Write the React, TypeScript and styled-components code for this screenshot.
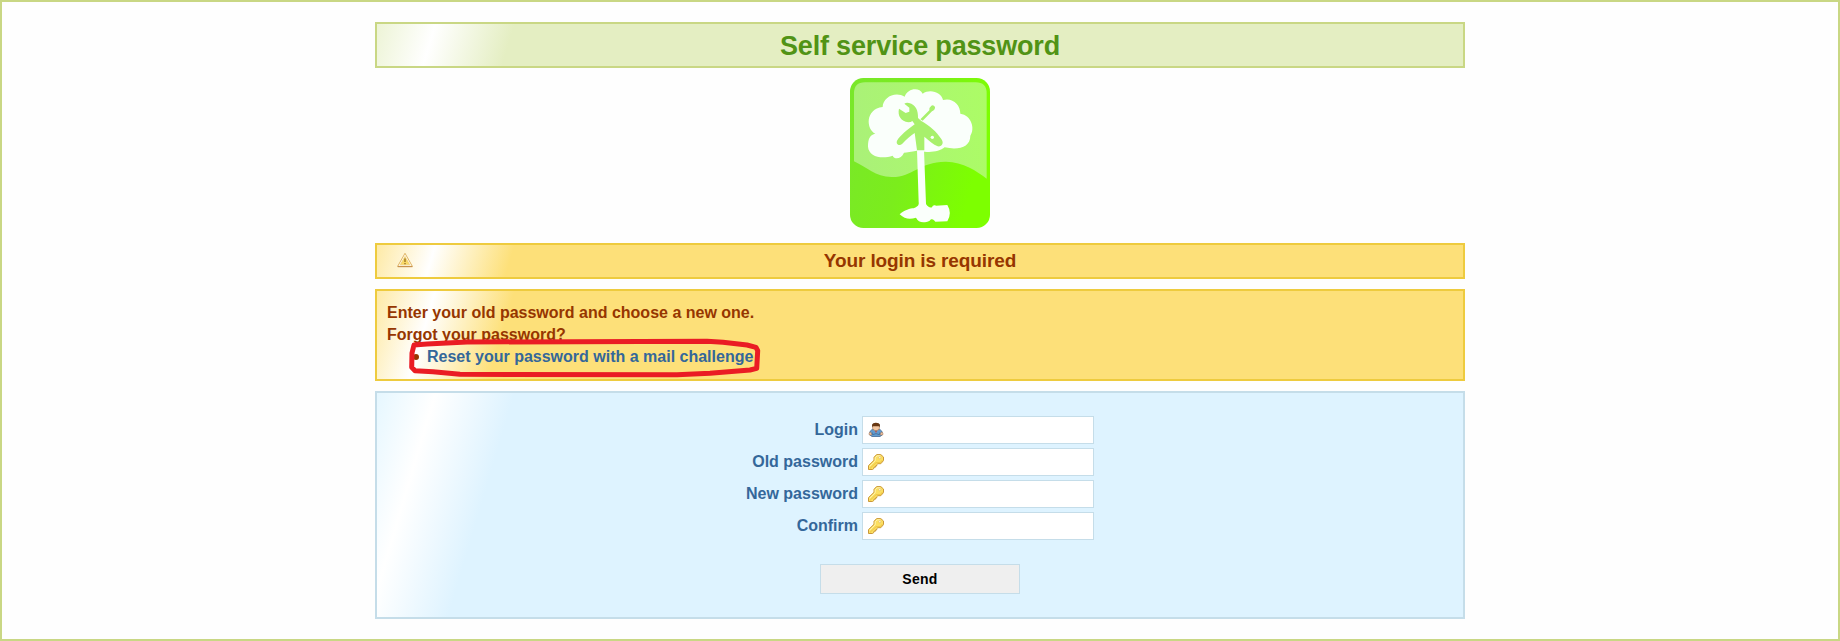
import React from "react";
import styled, { createGlobalStyle } from "styled-components";

const GlobalStyle = createGlobalStyle`
  * { box-sizing: border-box; }
  body {
    margin: 0;
    background: #fefefe;
    font-family: "Liberation Sans", Arial, sans-serif;
    font-size: 16px;
  }
`;

const tones = {
  green: { edge: "#c9d784", fill: "#e4eec2", start: "#edf4d6", text: "#519315" },
  yellow: { edge: "#eecb3e", fill: "#fde079", start: "#feeaa6", text: "#963600" },
  blue: { edge: "#c5dde9", fill: "#def3ff", start: "#e6f7ff", text: "#34679a" },
};

type Tone = keyof typeof tones;

const Page = styled.div`
  height: 641px;
  border: 2px solid #c9d784;
  padding-top: 20px;
`;

const Content = styled.main`
  width: 1090px;
  margin: 0 auto;
  display: flex;
  flex-direction: column;
`;

const Panel = styled.section<{ $tone: Tone; $height: number }>`
  position: relative;
  height: ${(p) => p.$height}px;
  margin-bottom: 10px;
  border: 2px solid ${(p) => tones[p.$tone].edge};
  color: ${(p) => tones[p.$tone].text};
  font-weight: bold;
  background: linear-gradient(
    106.5deg,
    ${(p) => tones[p.$tone].start} 0,
    #fff 56px,
    ${(p) => tones[p.$tone].fill} 132px
  );
`;

const Title = styled.h1`
  margin: 0;
  padding-top: 1px;
  font-size: 27px;
  line-height: 42px;
  letter-spacing: -0.17px;
  text-align: center;
`;

const LogoLink = styled.a`
  display: block;
  align-self: center;
  width: 140px;
  height: 150px;
  margin-bottom: 15px;
`;

const Notice = styled.p`
  margin: 0;
  font-size: 19px;
  line-height: 31px;
  letter-spacing: -0.12px;
  text-align: center;
`;

const NoticeIcon = styled.span`
  position: absolute;
  left: 20px;
  top: 7px;
  width: 16px;
  height: 16px;
`;

const Help = styled.div`
  padding: 11px 10px;
  line-height: 22px;
`;

const HelpList = styled.ul`
  margin: 0;
  padding: 0 0 0 26px;
  list-style: none;
`;

const HelpItem = styled.li`
  display: flex;
  align-items: center;

  &::before {
    content: "";
    width: 6px;
    height: 6px;
    margin-right: 8px;
    border-radius: 50%;
    background: currentColor;
  }
`;

const HelpLink = styled.a`
  color: #34679a;
  text-decoration: none;
`;

const Highlight = styled.svg`
  position: absolute;
  left: 30px;
  top: 46px;
  width: 356px;
  height: 44px;
`;

const Form = styled.form`
  display: flex;
  flex-direction: column;
  align-items: center;
  padding-top: 23px;
`;

const Fields = styled.div`
  display: grid;
  grid-template-columns: 116px 232px;
  gap: 4px;
  margin: 0 4px 24px 0;
`;

const Label = styled.label`
  text-align: right;
  white-space: nowrap;
  line-height: 27px;
`;

const Field = styled.div`
  height: 28px;
  display: flex;
  align-items: center;
  padding-left: 5px;
  background: #fff;
  border: 1px solid #c5dde9;
`;

const Input = styled.input`
  flex: 1;
  min-width: 0;
  height: 24px;
  margin-left: 4px;
  padding: 0;
  border: 0;
  outline: 0;
  background: transparent;
`;

const Send = styled.button`
  width: 200px;
  height: 30px;
  padding: 0;
  border: 1px solid #c5dde9;
  background: #efefef;
  color: #000;
  font: bold 14px "Liberation Sans", Arial, sans-serif;
  letter-spacing: 0.3px;
`;

function Logo() {
  return (
    <svg width="140" height="150" viewBox="30 24 420 450" preserveAspectRatio="none">
      <defs>
        <linearGradient id="base" x1="0" y1="0" x2="1" y2="0.3">
          <stop offset="0" stopColor="#79e72b" />
          <stop offset="0.5" stopColor="#7bed1c" />
          <stop offset="1" stopColor="#7dff00" />
        </linearGradient>
        <linearGradient id="gloss" x1="0" y1="0.4" x2="1" y2="0.3">
          <stop offset="0" stopColor="#aaf178" />
          <stop offset="1" stopColor="#acfc66" />
        </linearGradient>
      </defs>
      <rect x="30" y="24" width="420" height="450" rx="40" fill="url(#base)" />
      <path
        d="M42 274V70Q42 37 75 37H407Q440 37 440 70V326C410 303 370 276 318 275C240 274 218 322 155 321C105 320 82 292 42 274Z"
        fill="url(#gloss)"
      />
      <path
        d="M106 191C78 178 75 117 128 111C128 82 166 62 194 80C202 55 238 50 248 71C272 54 305 69 309 90C338 82 361 104 361 131C394 136 406 175 391 197C391 231 357 241 314 232C301 243 276 248 254 245L230 242C214 245 200 247 192 248C184 267 164 270 158 257C124 269 86 259 84 230C84 204 91 194 106 191Z"
        fill="#fafffb"
      />
      <path
        d="M231 240H252L258 402C263 410 269 414 276 412C278 406 282 404 288 407L322 405Q337 429 322 454L286 455C281 448 275 444 269 452C253 460 235 459 228 443C210 449 195 448 179 433C193 420 211 415 221 415C231 410 238 407 236 396Z"
        fill="#fafffb"
      />
      <g fill="#a8f06c">
        <path d="M177 116C172 137 183 154 205 157Q213 157 217 153L224 163C203 178 181 196 171 212C167 223 178 229 187 221C200 208 211 198 224 189L231 241H253V200C268 213 280 224 293 229C306 231 313 219 304 207C290 186 268 166 244 153L234 144C235 121 227 104 207 99Q199 97 193 101L208 113V125L197 129Z" />
        <path d="M241 148L268 121Q267 112 274 107Q281 104 285 111Q286 119 276 124L248 152Z" />
      </g>
      <circle cx="277" cy="202" r="5" fill="#fafffb" />
    </svg>
  );
}

function WarningIcon() {
  return (
    <svg width="16" height="16" viewBox="0 0 16 16">
      <path d="M8 1.3L15.4 14.4H.6Z" fill="#fffdf0" stroke="#dcac54" strokeWidth=".9" strokeLinejoin="round" />
      <path d="M8 4.4L12.8 12.8H3.2Z" fill="#f8d967" stroke="#edc774" strokeWidth=".6" />
      <path d="M.8 14.7H15.4" stroke="#bd8142" strokeWidth=".9" />
      <path d="M8 6.5v3.6M8 10.9v1.3" stroke="#a0792a" strokeWidth="1.5" />
    </svg>
  );
}

function UserIcon() {
  return (
    <svg width="16" height="16" viewBox="0 0 16 16">
      <path d="M1.6 12.8Q1.4 7.8 5 7.5H11Q14.6 7.8 14.4 12.8L12 14.5H4Z" fill="#609bd0" stroke="#416997" strokeWidth=".8" />
      <path d="M1 11.5Q1 10 3 10.3L4.2 13H1.3ZM15 11.5Q15 10 13 10.3L11.8 13H14.7Z" fill="#ecc19e" stroke="#a27355" strokeWidth=".5" />
      <path d="M6 7.5H10L8 11.3Z" fill="#9fc1de" />
      <path d="M8 8.2L9 9.2L8 11.3L7 9.2Z" fill="#a34d54" />
      <path d="M4.6 3H11.4V6.4Q11 8.5 8 8.7Q5 8.5 4.6 6.4Z" fill="#f3c7a1" stroke="#8b5935" strokeWidth=".5" />
      <path d="M4.1 5V2.5Q4.8.7 8 .8Q11.3.8 11.9 2.6V5L10.9 4.3H5.2Z" fill="#673712" />
      <path d="M5 12.6L8 11.6L11 12.6M4.3 10.6V13M11.7 10.6V13" fill="none" stroke="#39648f" strokeWidth=".7" />
    </svg>
  );
}

function KeyIcon() {
  return (
    <svg width="16" height="16" viewBox="0 0 16 16">
      <path
        d="M8.6.6H12.8L15.5 3V6.6L12.8 9.7H9.9L8.7 10.8V12H7.4V13.2H6V14.3L4.6 15.5H.5V11.6L6 6.3V3.3Z"
        fill="#fbdf62"
        stroke="#cb9838"
        strokeWidth="1"
        strokeLinejoin="round"
      />
      <path d="M1.6 12.3L7.2 6.8V3.8L9.2 1.8H12.2" fill="none" stroke="#fff3ae" />
      <path d="M2 14.4L8 8.7H12.2L14.4 6.1" fill="none" stroke="#e8bb3a" strokeWidth=".8" />
      <circle cx="11.8" cy="3.7" r="1.1" fill="#fffbe8" stroke="#d8ac48" strokeWidth=".5" />
    </svg>
  );
}

const fields = [
  { name: "Login", type: "text", icon: <UserIcon /> },
  { name: "Old password", type: "password", icon: <KeyIcon /> },
  { name: "New password", type: "password", icon: <KeyIcon /> },
  { name: "Confirm", type: "password", icon: <KeyIcon /> },
];

export default function App() {
  return (
    <>
      <GlobalStyle />
      <Page>
        <Content>
          <Panel $tone="green" $height={46}>
            <Title>Self service password</Title>
          </Panel>
          <LogoLink>
            <Logo />
          </LogoLink>
          <Panel $tone="yellow" $height={36}>
            <NoticeIcon>
              <WarningIcon />
            </NoticeIcon>
            <Notice>Your login is required</Notice>
          </Panel>
          <Panel $tone="yellow" $height={92}>
            <Help>
              Enter your old password and choose a new one.
              <br />
              Forgot your password?
              <HelpList>
                <HelpItem>
                  <HelpLink>Reset your password with a mail challenge</HelpLink>
                </HelpItem>
              </HelpList>
            </Help>
            <Highlight viewBox="407 337 356 44">
              <path
                d="M414 345L427 344L467 342L707 341.3L723 342.3L747 345L756 347.3L757.7 350.7L756.7 368.3L750 370L710 373.3L677 374.7L460 374.3L433 371.7L415 370.7L411.7 367.3L412 353Z"
                fill="none"
                stroke="#ea1c24"
                strokeWidth="5"
                strokeLinejoin="round"
                strokeLinecap="round"
              />
            </Highlight>
          </Panel>
          <Panel $tone="blue" $height={228}>
            <Form>
              <Fields>
                {fields.map((f) => (
                  <React.Fragment key={f.name}>
                    <Label htmlFor={f.name}>{f.name}</Label>
                    <Field>
                      {f.icon}
                      <Input id={f.name} type={f.type} />
                    </Field>
                  </React.Fragment>
                ))}
              </Fields>
              <Send type="button">Send</Send>
            </Form>
          </Panel>
        </Content>
      </Page>
    </>
  );
}
